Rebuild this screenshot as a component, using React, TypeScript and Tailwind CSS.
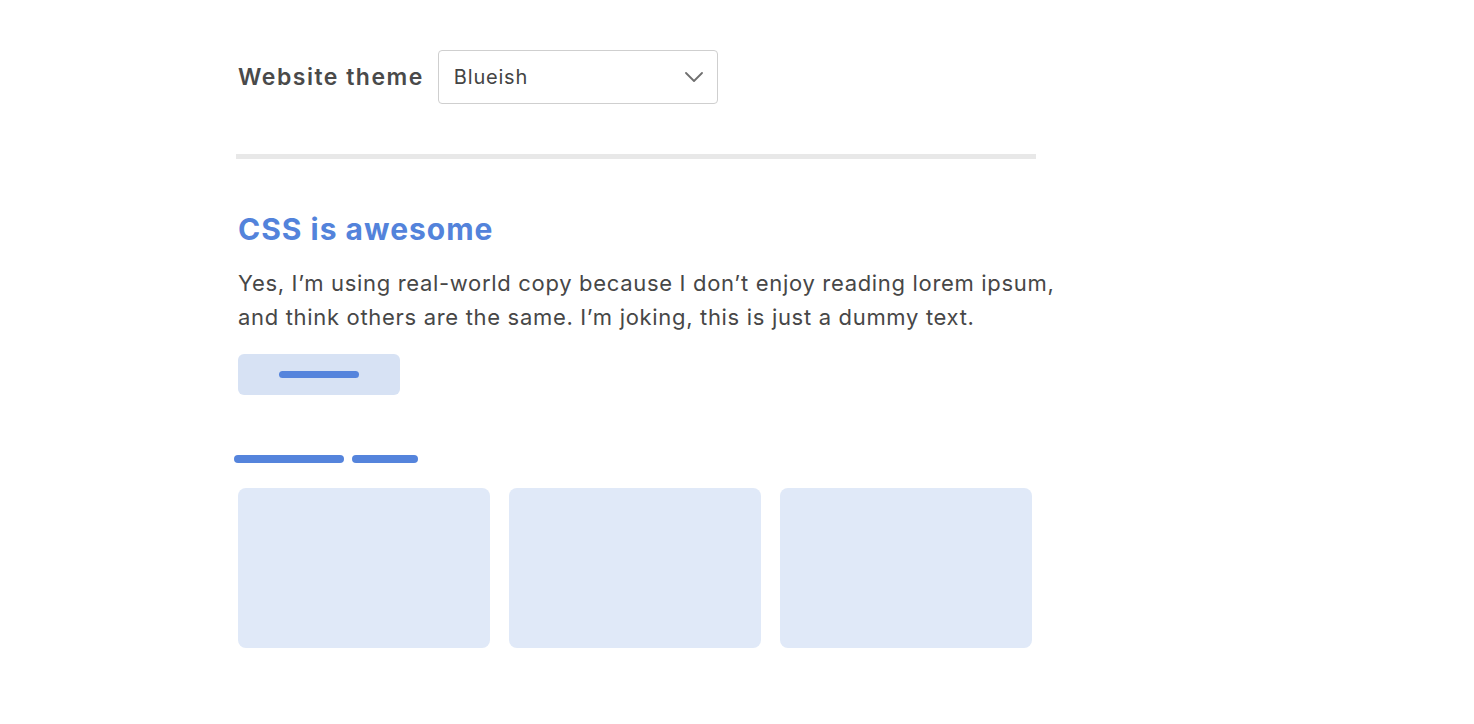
export default function App() {
  const font = { fontFamily: 'Inter, "Noto Sans", "Liberation Sans", sans-serif' };
  return (
    <div className="min-h-screen bg-white pl-[238px] pt-[50px] text-[#474747]" style={font}>
      {/* Theme picker */}
      <div className="flex items-center gap-[14px]">
        <span className="text-[23px] font-semibold tracking-[1.5px] text-[#4a4a4a]">Website theme</span>
        <div className="flex h-[54px] w-[280px] items-center justify-between rounded-[4px] border border-[#cfcfcf] pl-[15px] pr-[14px]">
          <span className="text-[20px] tracking-[0.8px] text-[#444]">Blueish</span>
          <svg width="18" height="10" viewBox="0 0 18 10" fill="none" className="text-[#6f6f6f]">
            <polyline points="1,1 9,9 17,1" stroke="currentColor" strokeWidth="1.8" strokeLinecap="round" strokeLinejoin="round" />
          </svg>
        </div>
      </div>

      <div className="-ml-[2px] mt-[50px] h-[5px] w-[800px] bg-[#e8e8e8]" />

      {/* Content */}
      <h2 className="mt-[50px] text-[30px] font-bold leading-[40px] tracking-[1px] text-[#5383db]">CSS is awesome</h2>
      <p className="mt-[17px] w-[830px] text-[22px] leading-[34px] tracking-[0.68px] text-[#474747]">
        Yes, I’m using real-world copy because I don’t enjoy reading lorem ipsum, and think others are the same. I’m joking, this is just a dummy text.
      </p>
      <div className="mt-[20px] flex h-[41px] w-[162px] items-center justify-center rounded-[6px] bg-[#d7e2f4]">
        <div className="h-[7px] w-[80px] rounded-full bg-[#5584dc]" />
      </div>

      <div className="-ml-[4px] mt-[60px] flex gap-[8px]">
        <div className="h-[8px] w-[110px] rounded-full bg-[#5584dc]" />
        <div className="h-[8px] w-[66px] rounded-full bg-[#5584dc]" />
      </div>

      <div className="mt-[25px] grid w-[794px] grid-cols-3 gap-[19px]">
        <div className="h-[160px] rounded-[8px] bg-[#e0e9f8]" />
        <div className="h-[160px] rounded-[8px] bg-[#e0e9f8]" />
        <div className="h-[160px] rounded-[8px] bg-[#e0e9f8]" />
      </div>
    </div>
  );
}
